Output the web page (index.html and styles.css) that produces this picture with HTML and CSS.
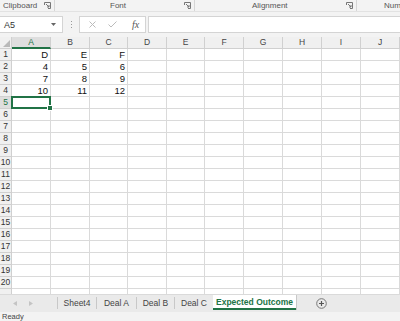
FILE: index.html
```html
<!DOCTYPE html>
<html lang="en">
<head>
    <meta charset="UTF-8">
    <meta name="viewport" content="width=device-width, initial-scale=1.0">
    <title>Expected Outcome</title>
    <link rel="stylesheet" href="styles.css">
</head>
<body>
    <!-- Cinta: solo las etiquetas de grupo -->
    <div class="ribbon">
        <div class="group group-clipboard">
            <span class="group-label">Clipboard</span>
            <svg class="launcher" width="7" height="7" viewBox="0 0 7 7"><path d="M0.5 3V0.5H6.5V6.5H4" fill="none" stroke="#777"/><path d="M2 2L5 5M5 3V5H3" fill="none" stroke="#777"/></svg>
        </div>
        <div class="group group-font">
            <span class="group-label">Font</span>
            <svg class="launcher" width="7" height="7" viewBox="0 0 7 7"><path d="M0.5 3V0.5H6.5V6.5H4" fill="none" stroke="#777"/><path d="M2 2L5 5M5 3V5H3" fill="none" stroke="#777"/></svg>
        </div>
        <div class="group group-alignment">
            <span class="group-label">Alignment</span>
            <svg class="launcher" width="7" height="7" viewBox="0 0 7 7"><path d="M0.5 3V0.5H6.5V6.5H4" fill="none" stroke="#777"/><path d="M2 2L5 5M5 3V5H3" fill="none" stroke="#777"/></svg>
        </div>
        <div class="group group-number">
            <span class="group-label">Number</span>
        </div>
    </div>

    <!-- Barra de fórmulas -->
    <div class="formula-bar">
        <div class="name-box">
            <span>A5</span>
            <svg width="5" height="3" viewBox="0 0 5 3"><path d="M0 0H5L2.5 3Z" fill="#666"/></svg>
        </div>
        <div class="grip"><i></i><i></i><i></i></div>
        <div class="fx-box">
            <svg width="7" height="7" viewBox="0 0 7 7"><path d="M0.5 0.5L6.5 6.5M6.5 0.5L0.5 6.5" stroke="#bbb" stroke-width="1"/></svg>
            <svg width="9" height="7" viewBox="0 0 9 7"><path d="M0.5 3.5L3 6L8.5 0.5" fill="none" stroke="#bbb" stroke-width="1"/></svg>
            <span class="fx">fx</span>
        </div>
        <div class="formula-input"></div>
    </div>

    <div class="sheet" id="sheet"></div>

    <!-- Pestañas de hojas -->
    <div class="tabs">
        <div class="tab-nav">
            <svg width="4" height="5" viewBox="0 0 4 5"><path d="M4 0V5L0 2.5Z" fill="#c4c4c4"/></svg>
            <svg width="4" height="5" viewBox="0 0 4 5"><path d="M0 0V5L4 2.5Z" fill="#c4c4c4"/></svg>
        </div>
        <div class="tab" style="width: 39px;">Sheet4</div>
        <div class="tab" style="width: 40px;">Deal A</div>
        <div class="tab" style="width: 38px;">Deal B</div>
        <div class="tab" style="width: 39px;">Deal C</div>
        <div class="tab active">Expected Outcome</div>
        <div class="add-sheet">
            <svg width="11" height="11" viewBox="0 0 11 11"><circle cx="5.5" cy="5.5" r="4.8" fill="none" stroke="#777"/><path d="M5.5 3V8M3 5.5H8" stroke="#555" stroke-width="1.2"/></svg>
        </div>
    </div>

    <div class="status">Ready</div>

    <script>
        // Construye la cuadrícula de la hoja
        const cols = ['A', 'B', 'C', 'D', 'E', 'F', 'G', 'H', 'I', 'J'];
        const data = {
            1: ['D', 'E', 'F'],
            2: ['4', '5', '6'],
            3: ['7', '8', '9'],
            4: ['10', '11', '12']
        };
        const sheet = document.getElementById('sheet');
        let html = '<div class="hdr corner"><svg width="7" height="7" viewBox="0 0 7 7"><path d="M7 0V7H0Z" fill="#b9b9b9"/></svg></div>';
        cols.forEach(c => {
            html += '<div class="hdr col-hdr' + (c === 'A' ? ' active' : '') + '">' + c + '</div>';
        });
        // La fila 21 solo asoma unos píxeles, sin número visible
        for (let r = 1; r <= 21; r++) {
            const label = r <= 20 ? r : '';
            html += '<div class="hdr row-hdr' + (r === 5 ? ' active' : '') + '">' + label + '</div>';
            cols.forEach((c, i) => {
                const value = data[r] && data[r][i] ? data[r][i] : '';
                const selected = (r === 5 && c === 'A') ? ' selected' : '';
                html += '<div class="cell' + selected + '">' + value + '</div>';
            });
        }
        sheet.innerHTML = html;
    </script>
</body>
</html>
```

FILE: styles.css
```css
/* Estilos generales */
body {
    margin: 0;
    width: 400px;
    height: 321px;
    overflow: hidden;
    font-family: "Liberation Sans", Arial, sans-serif;
    color: #444;
    background-color: #f3f3f3;
    display: flex;
    flex-direction: column;
}

/* Cinta */
.ribbon {
    height: 12px;
    display: flex;
    box-sizing: border-box;
    border-bottom: 1px solid #e2e2e2;
    font-size: 8px;
    color: #555;
}

.group {
    display: flex;
    align-items: center;
    box-sizing: border-box;
    border-right: 1px solid #d6d6d6;
    padding-right: 3px;
}

.group-label {
    flex: 1;
    text-align: center;
    line-height: 11px;
    white-space: nowrap;
}

.group-clipboard {
    width: 55px;
}

.group-clipboard .group-label {
    text-align: left;
    padding-left: 3px;
}

.group-font {
    width: 140px;
}

.group-font .group-label {
    text-align: left;
    padding-left: 55px;
}

.group-alignment {
    width: 162px;
}

.group-alignment .group-label {
    text-align: left;
    padding-left: 57px;
}

.group-number {
    flex: 1;
    border-right: none;
    overflow: hidden;
}

.group-number .group-label {
    text-align: left;
    padding-left: 27px;
}

/* Barra de fórmulas */
.formula-bar {
    height: 25px;
    display: flex;
    align-items: flex-start;
    padding-top: 4px;
    box-sizing: border-box;
}

.name-box {
    width: 63px;
    height: 17px;
    box-sizing: border-box;
    background-color: #fff;
    border: 1px solid #d4d4d4;
    border-left: none;
    display: flex;
    align-items: center;
    justify-content: space-between;
    padding: 0 6px 0 4px;
    font-size: 9px;
    color: #333;
}

.grip {
    width: 16px;
    height: 17px;
    display: flex;
    flex-direction: column;
    align-items: center;
    justify-content: center;
    gap: 2px;
}

.grip i {
    width: 1px;
    height: 1px;
    background-color: #999;
}

.fx-box {
    width: 67px;
    height: 17px;
    box-sizing: border-box;
    background-color: #fff;
    border: 1px solid #d4d4d4;
    display: flex;
    align-items: center;
    padding-left: 9px;
    gap: 12px;
}

.fx {
    font-family: "Liberation Serif", serif;
    font-style: italic;
    font-size: 10px;
    color: #555;
    margin-left: 3px;
}

.formula-input {
    flex: 1;
    height: 17px;
    margin-left: 2px;
    box-sizing: border-box;
    background-color: #fff;
    border: 1px solid #d4d4d4;
    border-right: none;
}

/* Cuadrícula */
.sheet {
    height: 257px;
    overflow: hidden;
    display: grid;
    grid-template-columns: 12px 39px 39px 38px 39px 38px 39px 39px 39px 39px 39px;
    grid-auto-rows: 12px;
    background-color: #fff;
}

.cell {
    box-sizing: border-box;
    border-right: 1px solid #dadada;
    border-bottom: 1px solid #dadada;
    font-size: 9.5px;
    line-height: 11px;
    text-align: right;
    padding-right: 2px;
    color: #111;
}

.cell.selected {
    position: relative;
}

.cell.selected::after {
    content: "";
    position: absolute;
    top: -1px;
    left: -1px;
    right: -1px;
    bottom: -1px;
    border: 2px solid #217346;
}

.cell.selected::before {
    content: "";
    position: absolute;
    right: -3px;
    bottom: -3px;
    width: 4px;
    height: 4px;
    background-color: #217346;
    border: 1px solid #fff;
    z-index: 1;
}

.hdr {
    box-sizing: border-box;
    background-color: #f0f0f0;
    border-right: 1px solid #d0d0d0;
    border-bottom: 1px solid #d0d0d0;
    font-size: 8.5px;
    line-height: 11px;
    text-align: center;
    color: #444;
}

.corner {
    display: flex;
    align-items: flex-end;
    justify-content: flex-end;
    padding: 0 1px 1px 0;
}

.col-hdr.active {
    background-color: #dedede;
    color: #217346;
    border-bottom: 2px solid #217346;
}

.row-hdr {
    font-size: 8.5px;
    color: #333;
}

.row-hdr.active {
    background-color: #dedede;
    color: #217346;
}

/* Pestañas */
.tabs {
    height: 18px;
    display: flex;
    align-items: stretch;
    background-color: #eaeaea;
    border-top: 1px solid #dadada;
    box-sizing: border-box;
    font-size: 8.5px;
}

.tab-nav {
    width: 57px;
    display: flex;
    align-items: center;
    padding-left: 13px;
    gap: 12px;
    box-sizing: border-box;
}

.tab {
    display: flex;
    align-items: center;
    justify-content: center;
    border-left: 1px solid #c8c8c8;
    box-sizing: border-box;
    margin: 2px 0 3px;
    color: #444;
}

.tab.active {
    width: 83px;
    margin: 0 0 2px;
    background-color: #fff;
    color: #217346;
    font-weight: bold;
    border-left: none;
    border-bottom: 2px solid #217346;
    box-shadow: 1px 0 0 #c8c8c8;
}

.add-sheet {
    display: flex;
    align-items: center;
    padding-left: 20px;
}

/* Barra de estado */
.status {
    height: 9px;
    font-size: 7.5px;
    line-height: 9px;
    padding-left: 2px;
    color: #444;
    background-color: #f3f3f3;
}
```
